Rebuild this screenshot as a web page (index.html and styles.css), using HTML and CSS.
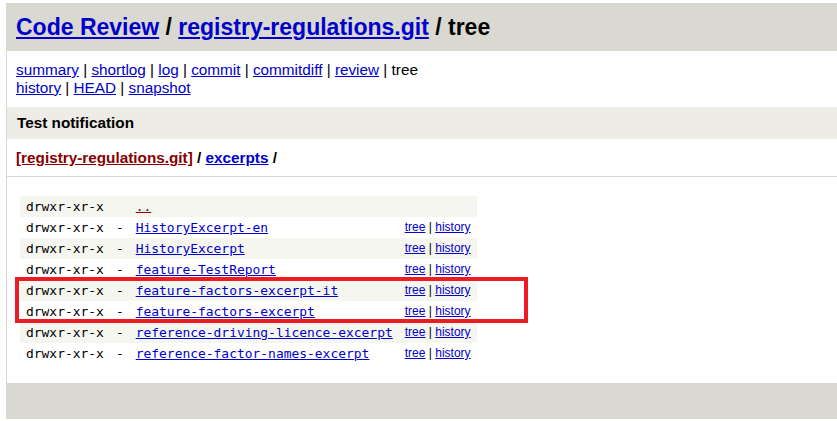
FILE: index.html
```html
<!DOCTYPE html>
<html>
<head>
<meta charset="utf-8">
<title>Code Review - registry-regulations.git/tree</title>
<link rel="stylesheet" href="styles.css">
</head>
<body>
<div class="page-header">
  <a href="#">Code Review</a> / <a href="#">registry-regulations.git</a> / tree
</div>
<div class="page-nav">
  <a href="#">summary</a> | <a href="#">shortlog</a> | <a href="#">log</a> | <a href="#">commit</a> | <a href="#">commitdiff</a> | <a href="#">review</a> | tree<br>
  <a href="#">history</a> | <a href="#">HEAD</a> | <a href="#">snapshot</a>
</div>
<div class="title">Test notification</div>
<div class="page-path"><a class="visited" href="#">[registry-regulations.git]</a> / <a href="#">excerpts</a> /</div>
<div class="tree-wrap">
  <table class="tree">
    <tr class="dark"><td class="mode">drwxr-xr-x</td><td class="size"></td><td class="name"><a class="visited" href="#">..</a></td><td class="link"></td></tr>
    <tr class="light"><td class="mode">drwxr-xr-x</td><td class="size">-</td><td class="name"><a href="#">HistoryExcerpt-en</a></td><td class="link"><a href="#">tree</a> | <a href="#">history</a></td></tr>
    <tr class="dark"><td class="mode">drwxr-xr-x</td><td class="size">-</td><td class="name"><a href="#">HistoryExcerpt</a></td><td class="link"><a href="#">tree</a> | <a href="#">history</a></td></tr>
    <tr class="light"><td class="mode">drwxr-xr-x</td><td class="size">-</td><td class="name"><a href="#">feature-TestReport</a></td><td class="link"><a href="#">tree</a> | <a href="#">history</a></td></tr>
    <tr class="dark"><td class="mode">drwxr-xr-x</td><td class="size">-</td><td class="name"><a href="#">feature-factors-excerpt-it</a></td><td class="link"><a href="#">tree</a> | <a href="#">history</a></td></tr>
    <tr class="light"><td class="mode">drwxr-xr-x</td><td class="size">-</td><td class="name"><a href="#">feature-factors-excerpt</a></td><td class="link"><a href="#">tree</a> | <a href="#">history</a></td></tr>
    <tr class="dark"><td class="mode">drwxr-xr-x</td><td class="size">-</td><td class="name"><a href="#">reference-driving-licence-excerpt</a></td><td class="link"><a href="#">tree</a> | <a href="#">history</a></td></tr>
    <tr class="light"><td class="mode">drwxr-xr-x</td><td class="size">-</td><td class="name"><a href="#">reference-factor-names-excerpt</a></td><td class="link"><a href="#">tree</a> | <a href="#">history</a></td></tr>
  </table>
  <div class="highlight"></div>
</div>
<div class="page-footer"></div>
</body>
</html>
```

FILE: styles.css
```css
html {
  background: #ffffff;
}
body {
  margin: 3px 0 2px 6px;
  border-left: 1px solid #d9d8d1;
  background: #ffffff;
  color: #000000;
  font-family: "Liberation Sans", Arial, sans-serif;
  font-size: 15.3px;
}
a {
  color: #0000cc;
  text-decoration: underline;
}
a.visited {
  color: #880000;
}
.page-header {
  height: 48px;
  box-sizing: border-box;
  padding: 9px 10px;
  line-height: 30px;
  background: #d9d8d1;
  font-size: 23px;
  font-weight: bold;
  margin-left: -1px;
}
.page-nav {
  padding: 10px 9px;
  line-height: 18px;
}
.title {
  padding: 7px 10px;
  line-height: 18px;
  background: #edece6;
  font-weight: bold;
}
.page-path {
  padding: 10px 9px;
  line-height: 17px;
  font-weight: bold;
  border-bottom: 1px solid #d9d8d1;
}
.tree-wrap {
  position: relative;
  margin: 19px 0 19px 13px;
  width: max-content;
}
.tree {
  border-spacing: 0;
  border-collapse: separate;
}
.tree tr.dark {
  background: #f6f6f0;
}
.tree td {
  padding: 2px 6px;
  height: 17px;
  line-height: 17px;
  vertical-align: top;
  white-space: nowrap;
}
.tree td.mode,
.tree td.size,
.tree td.name {
  font-family: "DejaVu Sans Mono", "Liberation Mono", monospace;
  font-size: 12.95px;
}
.tree td.link {
  font-size: 12px;
  line-height: 16px;
  padding-left: 6px;
  padding-right: 6px;
}
.highlight {
  position: absolute;
  left: -5px;
  top: 81px;
  width: 513px;
  height: 46px;
  box-sizing: border-box;
  border: 4px solid #ed1c24;
  pointer-events: none;
}
.page-footer {
  height: 36px;
  background: #d9d8d1;
  margin-left: -1px;
}
```
